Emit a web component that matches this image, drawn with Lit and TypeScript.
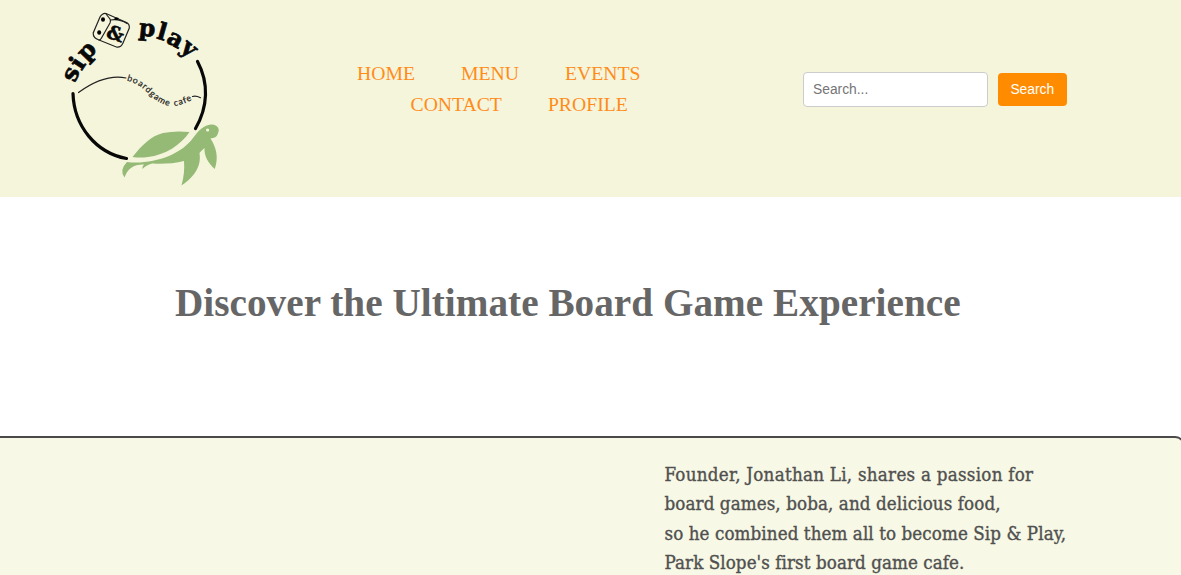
import { LitElement, html, css, svg } from "lit";
import { customElement } from "lit/decorators.js";

type Glyph = [string, number, number, number];

// Lettering around the ring: character, baseline centre x/y, rotation
const ringLetters: Glyph[] = [
  ["s", 77.500, 77, -67], ["i", 84, 67.500, -56], ["p", 92, 56, -46],
  ["p", 146.500, 36, 6], ["l", 160, 39.500, 16], ["a", 172, 45.500, 28], ["y", 184.500, 54, 39],
];

// Founder text: line and its tracking in pixels
const lines: [string, number][] = [
  ["Founder, Jonathan Li, shares a passion for", 0.27],
  ["board games, boba, and delicious food,", 0.1],
  ["so he combined them all to become Sip & Play,", 0.09],
  ["Park Slope's first board game cafe.", 0.08],
];

@customElement("sip-logo")
class SipLogo extends LitElement {
  static styles = css`
    :host { display: block; width: 180px; height: 197px; }
    svg { display: block; }
    .ring { fill: none; stroke: #080808; stroke-width: 3.2; stroke-linecap: round; }
    .thin { fill: none; stroke: #222; stroke-width: 1.2; stroke-linecap: round; }
    .letter { font: bold 23.5px "DejaVu Serif", serif; text-anchor: middle; fill: #080808; stroke: #080808; stroke-width: 0.7; stroke-linejoin: round; }
    .amp { font: bold 19px "DejaVu Serif", serif; text-anchor: middle; fill: #080808; stroke: #080808; stroke-width: 0.6; }
    .small { font: 8.8px Lato, sans-serif; letter-spacing: 0.85px; word-spacing: 1.6px; fill: #222; stroke: #222; stroke-width: 0.2; }
    .turtle { fill: #94ba76; }
  `;
  render() {
    return html`<svg width="180" height="197" viewBox="50 0 180 197" role="img" aria-label="sip & play boardgame cafe">
      <path class="ring" d="M73 93.5C74 126 96 153 126.500 158.500"/>
      <path class="ring" d="M197.500 61.500C209 83 208 107 195.500 128.500"/>
      ${ringLetters.map(([c, x, y, r]) => svg`<text class="letter" transform="translate(${x} ${y}) rotate(${r})">${c}</text>`)}
      <path class="thin" d="M102.500 14.200Q104 13 106 13.500L126 22.300Q129.800 24 129.300 28L123 43Q121 47.500 117 47.200L99 40Q93 38 93.200 33L100 17Q101 15 102.500 14.200Z"/>
      <path class="thin" d="M106 14L110 19Q111 21 110 23L101.500 38Q100.500 40 99 40M110.500 20Q119 18.500 127 23.500"/>
      <ellipse cx="103" cy="19.500" rx="2" ry="2.200"/><ellipse cx="99.200" cy="32.500" rx="2" ry="2.200"/><ellipse cx="116.500" cy="18.700" rx="2.200" ry="1.200"/>
      <text class="amp" transform="translate(113.500 40) rotate(18)">&amp;</text>
      <path class="thin" d="M78.500 92.500C93 82 109 74.500 126 78"/>
      <path class="thin" d="M192.500 96.500Q196 95.500 200.500 97.700"/>
      <path id="wave" fill="none" d="M126.500 80.500C138 83 145 90 152 97Q163 105.500 170 106Q182 106.500 197 97"/>
      <text class="small"><textPath href="#wave">boardgame cafe</textPath></text>
      <path class="turtle" d="M132.500 157C142 145 151 136 163 133Q175 130.500 189.500 132C181 145 165 155 148 157Q140 158 132.500 157Z"/>
      <path class="turtle" fill-rule="evenodd" d="M127 162C152 165 181 155 193 138C199 130 204 125 211 124.500Q218 124.500 218.800 130Q218 137 213 138L210.500 138.500C216 147 219 157 214.800 169C208 163 204 156 204.500 148Q201 151 199.500 153C202 169 191 179 181.500 185.500Q185 173 184 161C174 164 159 164 152 163.500Q146 165 142.500 169Q142 166 144 164.500Q129 164 124.500 177.500Q119 170 127 162ZM206 130A1.600 1.600 0 1 0 209.200 130A1.600 1.600 0 1 0 206 130Z"/>
    </svg>`;
  }
}

@customElement("app-root")
class AppRoot extends LitElement {
  static styles = css`
    :host { display: block; width: 100%; height: 575px; overflow: hidden; background: #fff; font-family: "Liberation Serif", serif; }
    * { box-sizing: border-box; }
    header { height: 197px; background: #f5f5dc; display: flex; align-items: flex-start; padding-left: 50px; }
    nav { margin: 58px 0 0 127px; width: 284px; display: grid; }
    .row { display: flex; gap: 46px; height: 31px; line-height: 31px; font-size: 19.7px; white-space: nowrap; }
    .row.second { margin-left: 53.5px; }
    a { color: #ff8c1a; text-decoration: none; }
    form { display: flex; align-items: center; gap: 10px; margin: 72px 0 0 162px; }
    input { width: 185px; height: 35px; border: 1px solid #ccc; border-radius: 4px; padding: 0 9px 1px; font: 13.8px "Liberation Sans", sans-serif; background: #fff; }
    input::placeholder { color: #757575; }
    button { width: 68.5px; height: 33px; border: 0; border-radius: 4px; padding: 0; background: #ff8c00; color: #fff; font: 13.8px "Liberation Sans", sans-serif; }
    .hero { height: 238.5px; padding: 83px 0 0 175px; }
    h1 { margin: 0; font-size: 39.2px; line-height: 46px; letter-spacing: 0.04px; color: #666; white-space: nowrap; }
    .about { width: 1197px; height: 300px; margin-left: -12px; border: 2px solid #4a4a4a; border-radius: 10px; background: #f7f8e5; padding: 22px 0 0 674.5px; }
    p { margin: 0; font: 18.6px/29.5px "Roboto Slab", "DejaVu Serif Condensed", "DejaVu Serif", serif; font-stretch: condensed; color: #505050; -webkit-text-stroke: 0.35px #505050; white-space: nowrap; }
    .line { display: block; }
  `;
  render() {
    return html`
      <header>
        <sip-logo></sip-logo>
        <nav>
          <div class="row"><a>HOME</a><a>MENU</a><a>EVENTS</a></div>
          <div class="row second"><a>CONTACT</a><a>PROFILE</a></div>
        </nav>
        <form><input placeholder="Search..." /><button type="button">Search</button></form>
      </header>
      <section class="hero"><h1>Discover the Ultimate Board Game Experience</h1></section>
      <section class="about">
        <p>${lines.map(([text, tracking]) => html`<span class="line" style="letter-spacing:${tracking}px">${text}</span>`)}</p>
      </section>`;
  }
}
